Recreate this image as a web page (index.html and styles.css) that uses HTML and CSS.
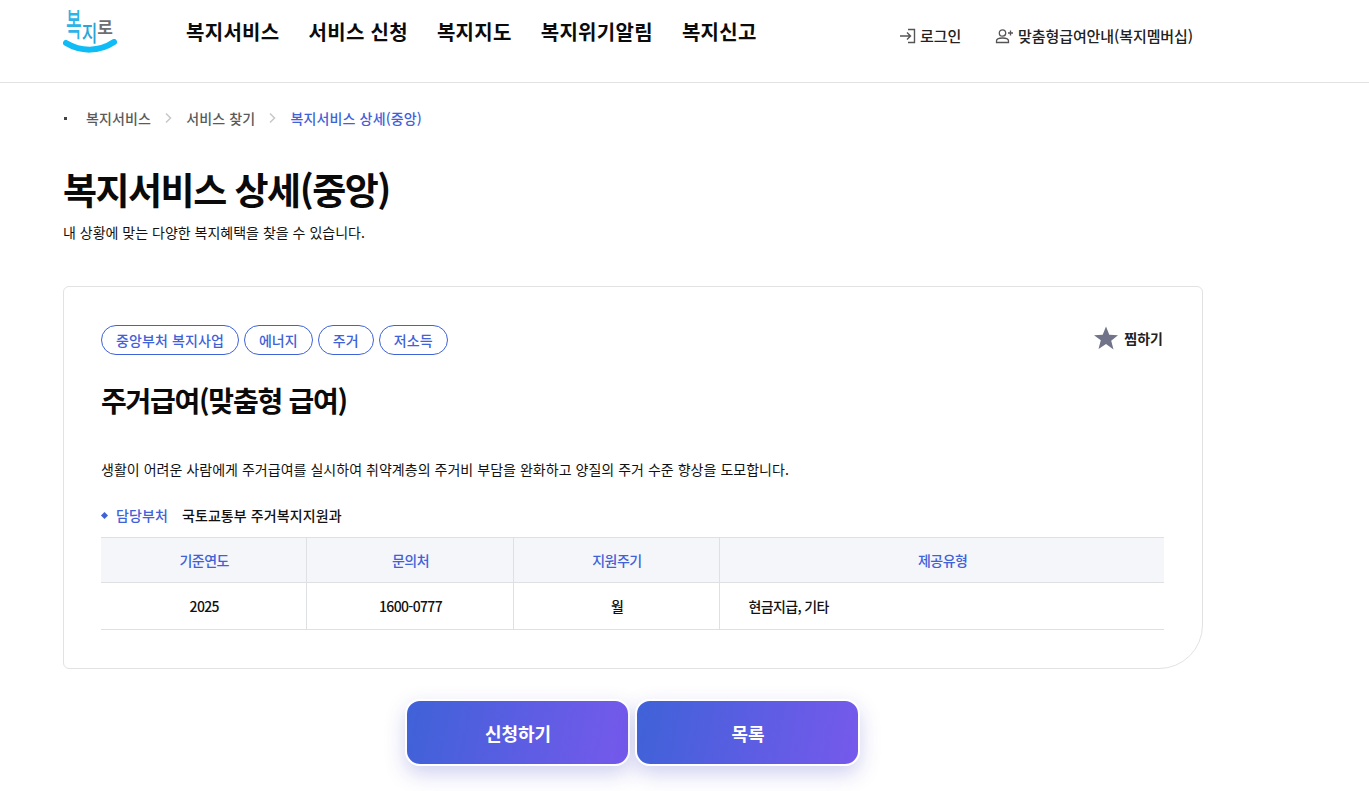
FILE: index.html
```html
<!DOCTYPE html>
<html lang="ko">
<head>
<meta charset="utf-8">
<title>복지서비스 상세(중앙)</title>
<link rel="stylesheet" href="styles.css">
</head>
<body>
<header class="header">
  <div class="header-inner">
    <a class="logo">
      <span class="logo-text"><span class="logo-a">복</span><span class="logo-c">지</span><span class="logo-b">로</span></span>
      <svg class="logo-smile" width="56" height="16" viewBox="0 0 56 16"><path d="M3 4 C 18 13, 36 13, 51 3" fill="none" stroke="#0fbcf5" stroke-width="6" stroke-linecap="round"/></svg>
    </a>
    <nav class="nav">
      <a>복지서비스</a><a>서비스 신청</a><a>복지지도</a><a>복지위기알림</a><a>복지신고</a>
    </nav>
    <div class="utils">
      <a class="util">
        <svg width="17" height="16" viewBox="0 0 17 16"><path d="M1 8h10M8 4.5 11.5 8 8 11.5M9 1.5h6.5v13H9" fill="none" stroke="#555" stroke-width="1.4"/></svg>
        로그인
      </a>
      <a class="util">
        <svg width="19" height="16" viewBox="0 0 19 16"><circle cx="7.5" cy="5" r="3.2" fill="none" stroke="#555" stroke-width="1.3"/><path d="M1.5 14.5v-1.5c0-2 2-3 6-3s6 1 6 3v1.5z" fill="none" stroke="#555" stroke-width="1.3"/><path d="M13 5h5M15.500 2.500v5" stroke="#555" stroke-width="1.3"/></svg>
        맞춤형급여안내(복지멤버십)
      </a>
    </div>
  </div>
</header>
<main class="main">
  <ol class="crumbs">
    <li class="crumb">복지서비스</li>
    <li class="crumb-sep"><svg width="9" height="12" viewBox="0 0 9 12"><path d="M2 1.500 6.500 6 2 10.500" fill="none" stroke="#c8c8c8" stroke-width="1.500"/></svg></li>
    <li class="crumb">서비스 찾기</li>
    <li class="crumb-sep"><svg width="9" height="12" viewBox="0 0 9 12"><path d="M2 1.500 6.500 6 2 10.500" fill="none" stroke="#c8c8c8" stroke-width="1.500"/></svg></li>
    <li class="crumb crumb-current">복지서비스 상세(중앙)</li>
  </ol>
  <h1 class="page-title">복지서비스 상세(중앙)</h1>
  <p class="page-desc">내 상황에 맞는 다양한 복지혜택을 찾을 수 있습니다.</p>
  <section class="card">
    <div class="card-top">
      <div class="tags">
        <span class="tag">중앙부처 복지사업</span>
        <span class="tag">에너지</span>
        <span class="tag">주거</span>
        <span class="tag">저소득</span>
      </div>
      <a class="fav">
        <svg width="24" height="24" viewBox="0 0 24 24"><path d="M12 .5l3.300 8.300 8.700.500-6.800 5.500 2.300 8.600L12 18.100l-7.500 4.800 2.300-8.600L0 9.300l8.700-.500z" fill="#70738a"/></svg>
        찜하기
      </a>
    </div>
    <h2 class="card-title">주거급여(맞춤형 급여)</h2>
    <p class="card-desc">생활이 어려운 사람에게 주거급여를 실시하여 취약계층의 주거비 부담을 완화하고 양질의 주거 수준 향상을 도모합니다.</p>
    <div class="dept">
      <span class="dept-mark"></span>
      <span class="dept-label">담당부처</span>
      <span class="dept-value">국토교통부 주거복지지원과</span>
    </div>
    <table class="info">
      <colgroup><col class="c1"><col class="c2"><col class="c3"><col></colgroup>
      <thead>
        <tr><th>기준연도</th><th>문의처</th><th>지원주기</th><th>제공유형</th></tr>
      </thead>
      <tbody>
        <tr><td>2025</td><td>1600-0777</td><td>월</td><td class="left">현금지급, 기타</td></tr>
      </tbody>
    </table>
  </section>
  <div class="actions">
    <a class="btn">신청하기</a>
    <a class="btn">목록</a>
  </div>
</main>
</body>
</html>
```
FILE: styles.css
```css
* { box-sizing: border-box; }
html, body { margin: 0; padding: 0; height: 791px; overflow: hidden; background: #fff; }
body { font-family: "Noto Sans CJK KR", "Noto Sans", sans-serif; color: #111; }
a { color: inherit; text-decoration: none; }

.header { height: 83px; border-bottom: 1px solid #e2e2e2; }
.header-inner { width: 1140px; margin-left: 63px; display: flex; height: 82px; position: relative; }
.logo { width: 123px; flex: none; position: relative; display: block; }
.logo-text { position: absolute; left: 3px; top: 6px; display: flex; align-items: flex-start; font-size: 17px; line-height: 18px; font-weight: 500; white-space: nowrap; }
.logo-a { color: #2db4e6; transform: scale(1, 1.9); transform-origin: top; }
.logo-c { color: #2aa5d8; margin-top: 14px; transform: scale(1, 1.3); transform-origin: top; }
.logo-b { color: #6e6e72; margin-top: 12px; font-weight: 700; }
.logo-smile { position: absolute; left: 0; top: 39px; }
.nav { display: flex; gap: 29px; padding-top: 16px; font-size: 20px; line-height: 32px; font-weight: 700; color: #0b0b0b; letter-spacing: 0.3px; white-space: nowrap; }
.utils { margin-left: auto; padding-right: 10px; display: flex; gap: 34px; padding-top: 25px; font-size: 15px; line-height: 22px; font-weight: 500; color: #222; letter-spacing: -0.1px; }
.util { display: flex; align-items: center; gap: 4px; height: 22px; white-space: nowrap; }

.main { padding-left: 63px; width: 1203px; }
.crumbs { list-style: none; margin: 0; padding: 11px 0 0 23px; display: flex; align-items: center; gap: 13px; height: 59px; font-size: 14px; line-height: 24px; color: #5a5a5a; font-weight: 500; letter-spacing: 0.15px; position: relative; }
.crumbs::before { content: ""; position: absolute; left: 1px; top: 34px; width: 3px; height: 3px; background: #444; }
.crumb-sep { display: flex; }
.crumb-current { color: #3f62d8; }
.page-title { margin: 22px 0 0; font-size: 37px; line-height: 50px; font-weight: 700; color: #0a0a0a; letter-spacing: -1.5px; }
.page-desc { margin: 7px 0 0; font-size: 14px; line-height: 22px; color: #111; letter-spacing: 0; }

.card { margin-top: 43px; width: 1140px; height: 383px; border: 1px solid #e2e2e2; border-radius: 6px 6px 44px 6px; padding: 38px 38px 0 37px; }
.card-top { display: flex; justify-content: space-between; align-items: center; height: 30px; }
.tags { display: flex; gap: 5px; }
.tag { height: 30px; padding: 0 14px; border: 1px solid #3f62d8; border-radius: 15px; font-size: 14px; line-height: 28px; font-weight: 500; color: #3f62d8; letter-spacing: 0.1px; white-space: nowrap; }
.fav { display: flex; align-items: center; gap: 6px; font-size: 14px; font-weight: 700; color: #222; margin-right: 1px; margin-top: -4px; letter-spacing: 0; }
.card-title { margin: 21px 0 0; font-size: 28px; line-height: 48px; font-weight: 700; color: #0a0a0a; letter-spacing: -1.25px; }
.card-desc { margin: 33px 0 0; font-size: 14px; line-height: 24px; color: #111; letter-spacing: 0.03px; white-space: nowrap; }
.dept { margin-top: 22px; height: 24px; display: flex; align-items: center; font-size: 14px; line-height: 24px; font-weight: 500; letter-spacing: 0.1px; }
.dept-mark { width: 5px; height: 5px; background: #3f62d8; transform: rotate(45deg); margin: 0 9px 0 1px; }
.dept-label { color: #3f62d8; margin-right: 14px; }
.dept-value { color: #111; }

.info { margin-top: 10px; width: 1063px; table-layout: fixed; border-collapse: collapse; border-top: 1px solid #dfe0e4; font-size: 14px; }
.c1 { width: 205px; }
.c2 { width: 207px; }
.c3 { width: 206px; }
.info th { height: 45px; padding: 0 0 0 2px; background: #f5f6fa; color: #3f62d8; font-weight: 500; border-bottom: 1px solid #dfe0e4; border-left: 1px solid #dfe0e4; letter-spacing: -0.5px; }
.info td { height: 47px; padding: 0 0 0 2px; text-align: center; color: #111; font-weight: 500; border-bottom: 1px solid #dfe0e4; border-left: 1px solid #dfe0e4; letter-spacing: -0.65px; }
.info th:first-child, .info td:first-child { border-left: 0; }
.info td.left { text-align: left; padding-left: 29px; }

.actions { margin-top: 30px; width: 1138px; display: flex; justify-content: center; gap: 5px; }
.btn { width: 225px; height: 67px; padding-left: 2px; display: flex; align-items: center; justify-content: center; border: 2px solid #fff; border-radius: 15px; background: linear-gradient(100deg, #3f62d8, #7659ec); color: #fff; font-size: 18px; font-weight: 700; box-shadow: 0 8px 20px rgba(70, 70, 200, .25); }
```
